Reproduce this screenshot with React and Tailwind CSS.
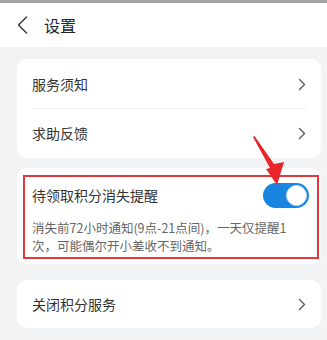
const Chevron = () => (
  <svg width="8" height="13" viewBox="0 0 8 13" fill="none" className="shrink-0">
    <path d="M1.5 1.5L6.5 6.5L1.5 11.5" stroke="#555" strokeWidth="1.3" strokeLinecap="round" strokeLinejoin="round" />
  </svg>
);

const Row = ({ label }) => (
  <div className="flex items-center justify-between h-[48px] pl-[15px] pr-[15px]">
    <span className="text-[14px] text-[#333]">{label}</span>
    <Chevron />
  </div>
);

const App = () => {
  return (
    <div
      className="relative w-[327px] h-[340px] overflow-hidden bg-[#f2f3f5]"
      style={{ fontFamily: '"Noto Sans CJK SC", "Noto Sans", sans-serif' }}
    >
      <div className="h-[3px] bg-[#a3a3a3]" />

      {/* Header */}
      <div className="flex items-center h-[44px] bg-white pl-[17px] gap-[16px]">
        <svg width="11" height="18" viewBox="0 0 11 18" fill="none">
          <path d="M9.5 1L1.5 9L9.5 17" stroke="#333" strokeWidth="1.4" strokeLinecap="round" strokeLinejoin="round" />
        </svg>
        <span className="text-[16px] text-[#222]">设置</span>
      </div>

      <div className="flex flex-col gap-[10px] pl-[17px] pt-[12px] pr-[6px]">
        {/* Card 1 */}
        <div className="bg-white rounded-[10px] py-[1px]">
          <Row label="服务须知" />
          <div className="mx-[15px] h-px bg-[#f0f0f0]" />
          <Row label="求助反馈" />
        </div>

        {/* Card 2 */}
        <div className="bg-white rounded-[10px] pl-[6px] pr-[2px] pt-[7px] pb-[5px]">
          <div className="border-2 border-[#e0393b] pl-[7px] pr-[8px] pt-[6px] pb-[3px]">
            <div className="flex items-center justify-between">
              <span className="text-[14px] text-[#333]">待领取积分消失提醒</span>
              <div className="w-[46px] h-[25px] rounded-full bg-[#1985e0] p-[2px] flex justify-end">
                <div className="w-[21px] h-[21px] rounded-full bg-white border border-[#cfe3f5]" />
              </div>
            </div>
            <p className="mt-[11px] w-[266px] text-[12.5px] leading-[17.5px] text-[#666]">
              消失前72小时通知(9点-21点间)，一天仅提醒1次，可能偶尔开小差收不到通知。
            </p>
          </div>
        </div>

        {/* Card 3 */}
        <div className="bg-white rounded-[10px] mt-[6px]">
          <Row label="关闭积分服务" />
        </div>
      </div>

      {/* Red arrow annotation */}
      <svg className="absolute left-0 top-0 pointer-events-none" width="327" height="340" viewBox="0 0 327 340">
        <polygon points="253,137 254.5,136 274,164 284,162 277,185 266,169 270,168" fill="#e8262a" />
      </svg>
    </div>
  );
};

export default App;
